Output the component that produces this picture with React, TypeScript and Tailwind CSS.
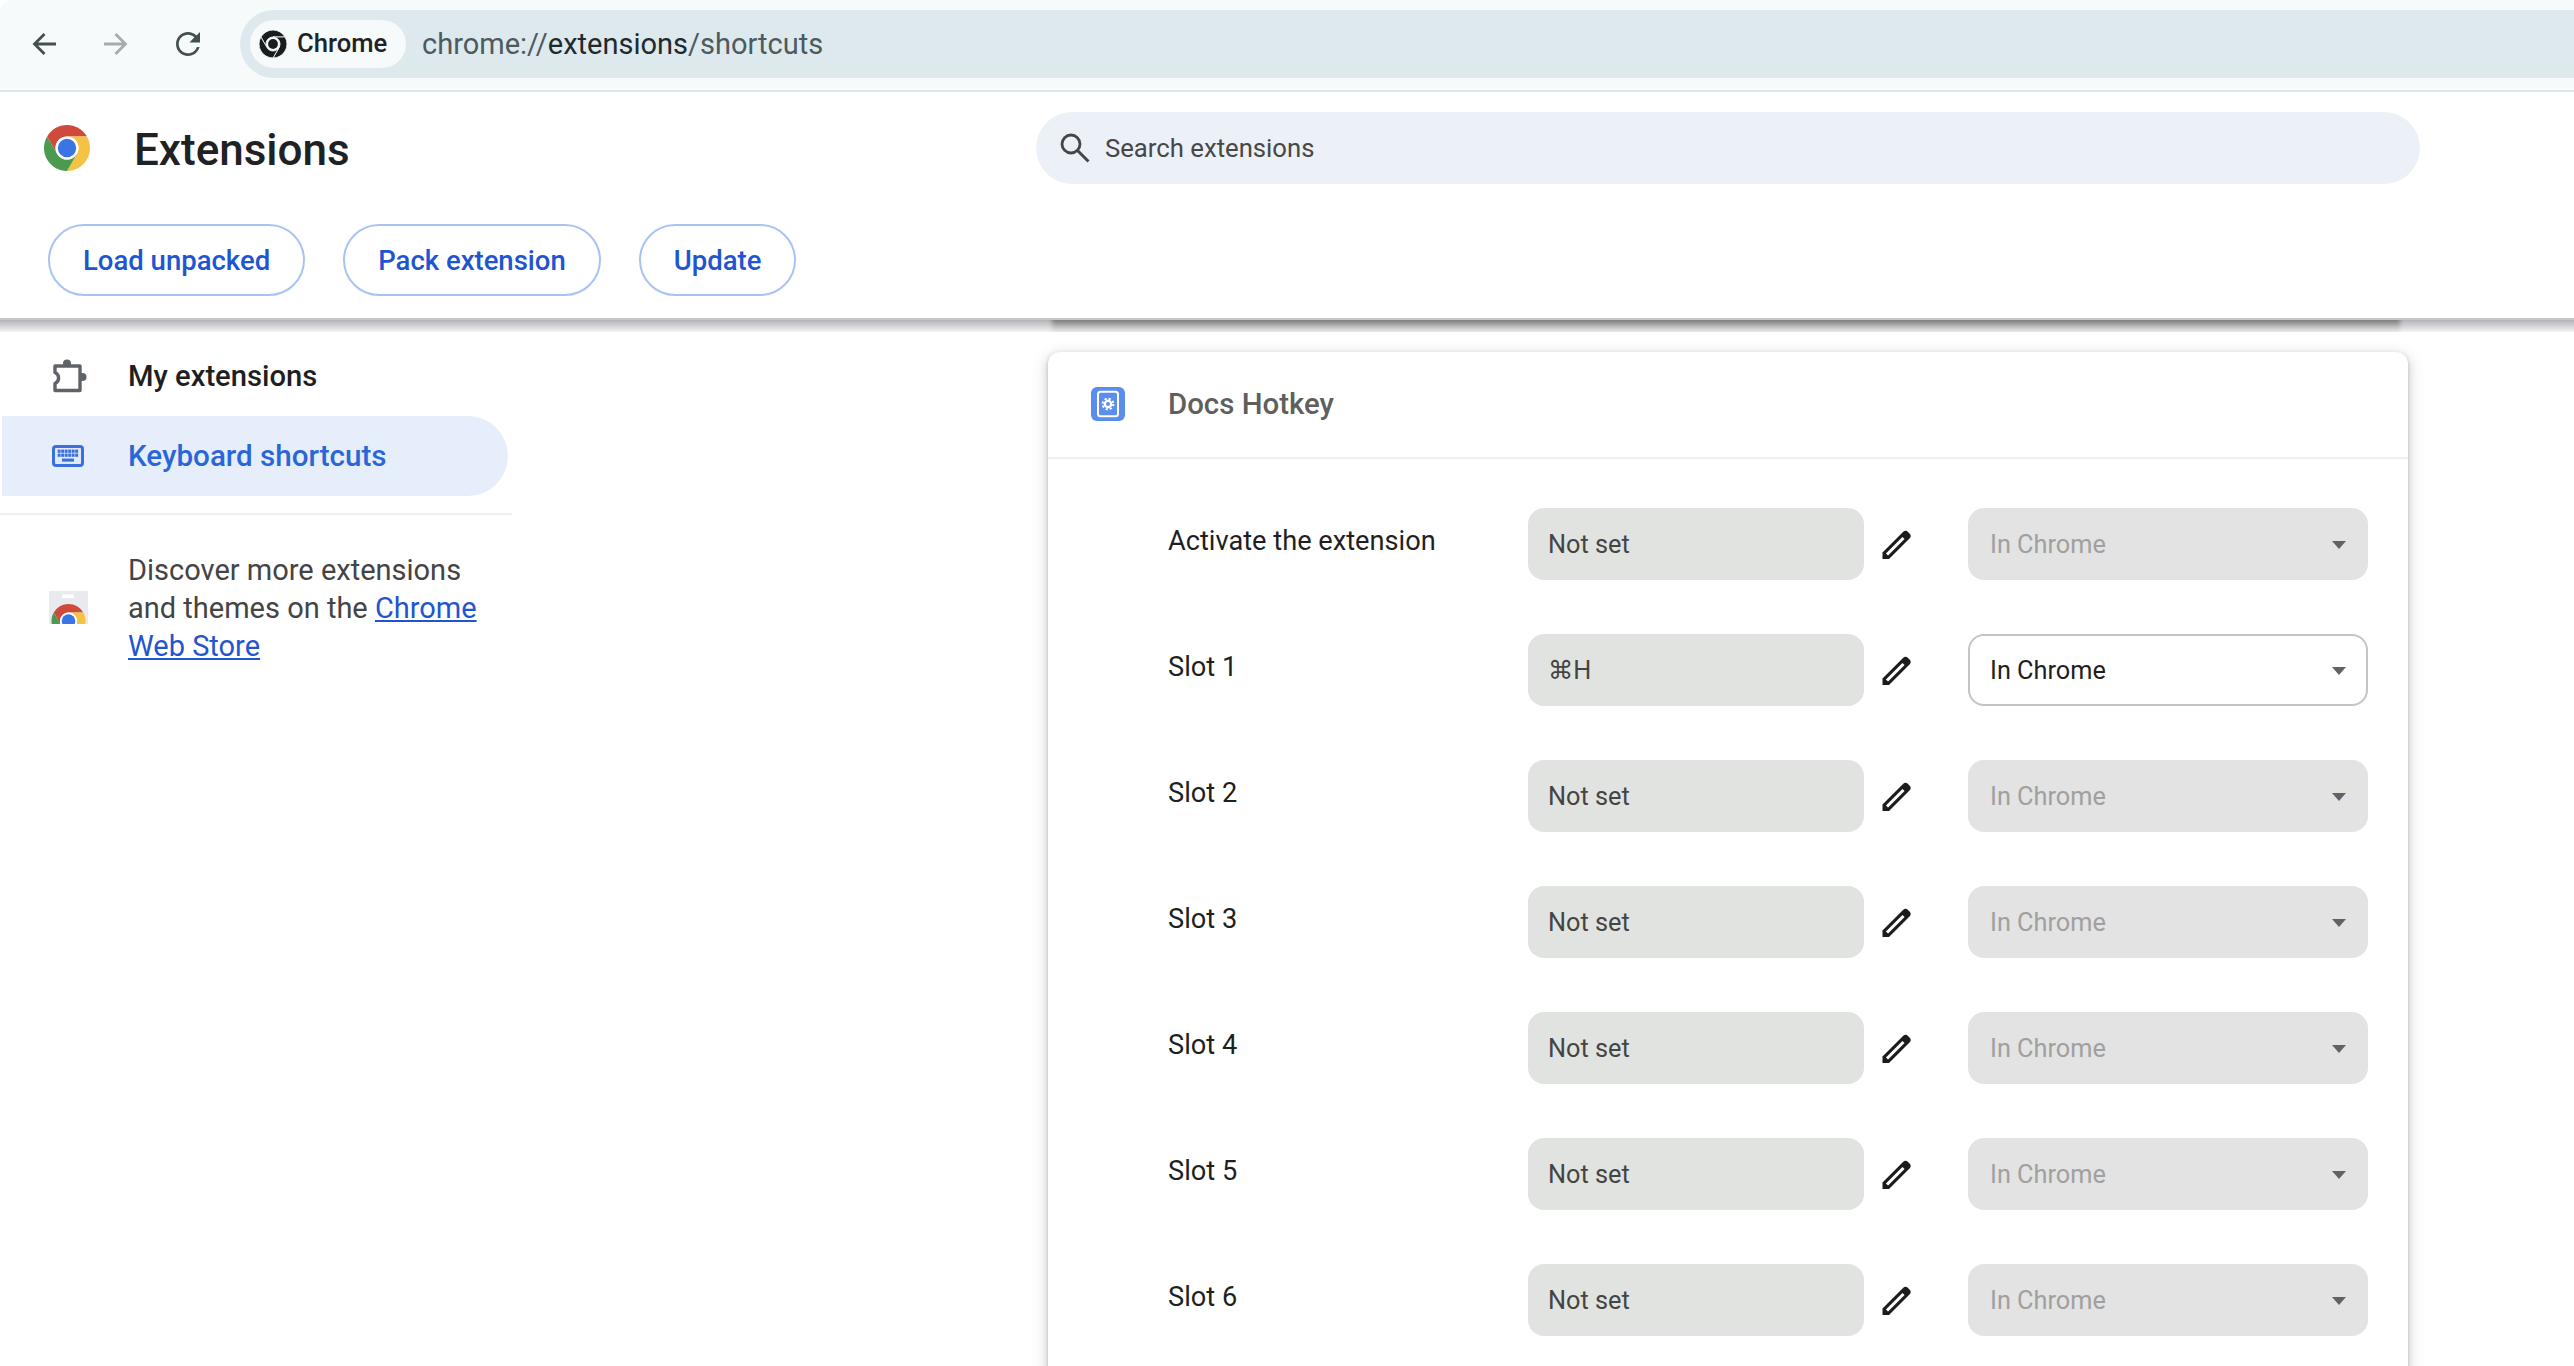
import * as React from "react";

const ChromeLogo = ({ size }: { size: number }) => (
  <svg width={size} height={size} viewBox="4 4 40 40">
    <path d="M41.32 14A20 20 0 0 0 6.68 14L15.34 29A10 10 0 0 1 24 14Z" fill="#cf4a3a" />
    <path d="M24 44A20 20 0 0 0 41.32 14L24 14A10 10 0 0 1 32.66 29Z" fill="#f4c245" />
    <path d="M6.68 14A20 20 0 0 0 24 44L32.66 29A10 10 0 0 1 15.34 29Z" fill="#4a9a4f" />
    <circle cx="24" cy="24" r="10" fill="#fff" />
    <circle cx="24" cy="24" r="8" fill="#3b74e4" />
  </svg>
);

const ChromeMono = () => (
  <svg width="28" height="28" viewBox="4 4 40 40">
    <g fill="#1a1d1f" stroke="#f6fafb" strokeWidth="1.2">
      <path d="M41.32 14A20 20 0 0 0 6.68 14L15.34 29A10 10 0 0 1 24 14Z" />
      <path d="M24 44A20 20 0 0 0 41.32 14L24 14A10 10 0 0 1 32.66 29Z" />
      <path d="M6.68 14A20 20 0 0 0 24 44L32.66 29A10 10 0 0 1 15.34 29Z" />
    </g>
    <circle cx="24" cy="24" r="7" fill="#1a1d1f" />
  </svg>
);

const StoreIcon = () => (
  <svg width="39" height="33" viewBox="0 0 39 33" className="shrink-0">
    <rect width="39" height="33" fill="#e8eaed" />
    <rect x="13" y="3.5" width="12" height="3.5" rx="1" fill="#fff" />
    <g transform="translate(19.5 30) scale(0.85) translate(-24 -24)">
      <path d="M41.32 14A20 20 0 0 0 6.68 14L15.34 29A10 10 0 0 1 24 14Z" fill="#cf4a3a" />
      <path d="M24 44A20 20 0 0 0 41.32 14L24 14A10 10 0 0 1 32.66 29Z" fill="#f4c245" />
      <path d="M6.68 14A20 20 0 0 0 24 44L32.66 29A10 10 0 0 1 15.34 29Z" fill="#4a9a4f" />
      <circle cx="24" cy="24" r="10" fill="#fff" />
      <circle cx="24" cy="24" r="8" fill="#3b74e4" />
    </g>
  </svg>
);

const PuzzleIcon = () => (
  <svg width="35" height="35" viewBox="0 0 35 35" className="shrink-0">
    <circle cx="15" cy="4.5" r="4" fill="#5f6368" />
    <circle cx="30.5" cy="18" r="4" fill="#5f6368" />
    <path
      d="M3 7H28V31.5H3V24.5A6 6 0 0 0 3 13.5Z"
      fill="#fff"
      stroke="#5f6368"
      strokeWidth="3.4"
      strokeLinejoin="round"
    />
  </svg>
);

const KeyboardIcon = () => {
  const keys = [0, 1, 2, 3, 4, 5];
  return (
    <svg width="32" height="22" viewBox="0 0 32 22" className="shrink-0">
      <rect x="1.5" y="1.5" width="29" height="19" rx="2.5" fill="#dfe9fb" stroke="#3a6fdc" strokeWidth="3" />
      {keys.map((k) => (
        <rect key={`a${k}`} x={5.7 + k * 3.5} y="4.6" width="2.9" height="3.2" fill="#3a6fdc" />
      ))}
      {keys.map((k) => (
        <rect key={`b${k}`} x={5.7 + k * 3.5} y="8.6" width="2.9" height="3.2" fill="#3a6fdc" />
      ))}
      <rect x="10" y="13.6" width="12" height="3" fill="#3a6fdc" />
    </svg>
  );
};

const DocsIcon = () => (
  <svg width="34" height="34" viewBox="0 0 34 34" className="shrink-0">
    <rect width="34" height="34" rx="6" fill="#5a8dee" />
    <rect x="7" y="4.8" width="20" height="24.4" rx="2.5" fill="none" stroke="#fff" strokeWidth="2" />
    <circle cx="17" cy="17" r="3.2" fill="none" stroke="#fff" strokeWidth="2.4" />
    <circle cx="17" cy="17" r="5.4" fill="none" stroke="#fff" strokeWidth="2" strokeDasharray="2.2 2.04" />
  </svg>
);

const PencilIcon = () => (
  <svg width="32" height="32" viewBox="0 0 32 32" className="shrink-0">
    <path d="M1.5 24.5L22 4Q24.5 1.5 27 4L28.5 5.5Q31 8 28.5 10.5L8 31H1.5Z" fill="#1c1c1c" />
    <path d="M6 26.5L22.5 10" stroke="#fff" strokeWidth="3" />
  </svg>
);

const rows = [
  { label: "Activate the extension", key: "Not set" },
  { label: "Slot 1", key: "⌘H", active: true },
  { label: "Slot 2", key: "Not set" },
  { label: "Slot 3", key: "Not set" },
  { label: "Slot 4", key: "Not set" },
  { label: "Slot 5", key: "Not set" },
  { label: "Slot 6", key: "Not set" },
];

const App = () => {
  return (
    <div className="flex h-[1366px] w-[2574px] flex-col overflow-hidden bg-white font-[Roboto,'DejaVu_Sans',sans-serif]">
      {/* browser toolbar */}
      <div className="flex h-[92px] shrink-0 items-start rounded-tl-[12px] border-b-2 border-[#dde6e9] bg-[#f6fafb] pt-[10px]">
        <div className="flex h-[68px] w-[240px] shrink-0 items-center pl-[28px]">
          <svg width="34" height="34" viewBox="0 0 34 34" className="shrink-0">
            <path d="M28 17H7M16.5 7L6.5 17L16.5 27" fill="none" stroke="#44504f" strokeWidth="2.8" />
          </svg>
          <svg width="34" height="34" viewBox="0 0 34 34" className="ml-[36px] shrink-0">
            <path d="M6 17H27M17.5 7L27.5 17L17.5 27" fill="none" stroke="#a7abac" strokeWidth="2.8" />
          </svg>
          <svg width="36" height="36" viewBox="0 0 24 24" className="ml-[38px] shrink-0">
            <path
              d="M17.65 6.35C16.2 4.9 14.21 4 12 4c-4.42 0-7.99 3.58-7.99 8s3.57 8 7.99 8c3.73 0 6.84-2.55 7.73-6h-1.8c-.82 2.33-3.04 4.2-5.93 4.2-3.41 0-6.2-2.79-6.2-6.2S8.59 5.8 12 5.8c1.66 0 3.14.69 4.22 1.78L13 11h7V4l-2.35 2.35z"
              fill="#44504f"
            />
          </svg>
        </div>
        <div className="flex h-[68px] flex-1 items-center rounded-l-full bg-[#dde9ed] pl-[10px]">
          <div className="flex h-[48px] w-[156px] items-center rounded-full bg-[#f6fafb] pl-[9px]">
            <ChromeMono />
            <span className="ml-[10px] text-[25.6px] leading-none font-medium text-[#1f2325]">Chrome</span>
          </div>
          <span className="ml-[16px] text-[29px] leading-none text-[#4d5a5e]">
            chrome://<span className="text-[#1f2a2d]">extensions</span>/shortcuts
          </span>
        </div>
      </div>

      {/* extensions header */}
      <header className="h-[228px] shrink-0 border-b-2 border-[#c8c8cc] bg-white">
        <div className="flex h-[112px] items-center">
          <div className="ml-[44px] flex w-[992px] items-center">
            <ChromeLogo size={46} />
            <h1 className="ml-[44px] pt-[4px] text-[44px] leading-none font-medium text-[#202124]">Extensions</h1>
          </div>
          <div className="flex h-[72px] w-[1384px] items-center rounded-full bg-[#ecf0f7] pl-[24px]">
            <svg width="30" height="30" viewBox="0 0 30 30" className="shrink-0">
              <circle cx="11" cy="11" r="9" fill="none" stroke="#444746" strokeWidth="2.8" />
              <path d="M17.5 17.5L28.5 28.5" stroke="#444746" strokeWidth="3" />
            </svg>
            <span className="ml-[15px] pt-[2px] text-[25.7px] leading-none text-[#474747]">Search extensions</span>
          </div>
        </div>
        <div className="mt-[20px] flex gap-[38px] pl-[48px]">
          {["Load unpacked", "Pack extension", "Update"].map((b) => (
            <button
              key={b}
              className="h-[72px] rounded-full border-2 border-[#a8c3f3] bg-white px-[33px] pt-[2px] text-[27.5px] leading-none font-medium text-[#1f55d0]"
            >
              {b}
            </button>
          ))}
        </div>
      </header>

      {/* shadow under the header */}
      <div className="h-[12px] shrink-0 overflow-hidden bg-linear-to-b from-[#b4b4b8] to-[#f5f5f5]">
        <div className="ml-[1052px] -mt-[3px] h-[15px] w-[1348px] bg-linear-to-b from-[#5c5c5c] via-[#a8a8a8] to-[#f1f1f1] blur-[2px]" />
      </div>

      <div className="flex min-h-0 flex-1">
        <aside className="w-[512px] shrink-0 pt-[4px]">
          <div className="flex h-[80px] items-center pl-[52px]">
            <PuzzleIcon />
            <span className="ml-[41px] pt-[2px] text-[29.2px] leading-none font-medium text-[#1f1f1f]">My extensions</span>
          </div>
          <div className="ml-[2px] flex h-[80px] w-[506px] items-center rounded-r-full bg-[#e6eefb] pl-[50px]">
            <KeyboardIcon />
            <span className="ml-[44px] pt-[2px] text-[29.6px] leading-none font-medium text-[#2b66d9]">Keyboard shortcuts</span>
          </div>
          <div className="mt-[17px] h-[2px] bg-[#f0f0f0]" />
          <div className="flex items-center pt-[36px] pl-[49px]">
            <div className="-mt-[2px] shrink-0">
              <StoreIcon />
            </div>
            <p className="ml-[40px] w-[370px] text-[29px] leading-[38px] text-[#444]">
              Discover more extensions and themes on the{" "}
              <span className="text-[#1f55d0] underline">Chrome Web Store</span>
            </p>
          </div>
        </aside>

        <main className="flex-1 pt-[20px] pl-[536px]">
          <div className="w-[1360px] rounded-t-[12px] bg-white pb-[60px] shadow-[0_2px_4px_rgba(60,64,67,0.3),0_4px_12px_4px_rgba(60,64,67,0.15)]">
            <div className="flex h-[107px] items-center border-b-2 border-[#f0f0f0] pb-[2px] pl-[43px]">
              <DocsIcon />
              <span className="ml-[43px] pt-[2px] text-[29.4px] leading-none font-medium text-[#5f5f5f]">Docs Hotkey</span>
            </div>
            <div className="flex flex-col gap-[54px] pt-[49px] pl-[120px]">
              {rows.map((r) => (
                <div key={r.label} className="flex h-[72px] items-center">
                  <span className="w-[360px] pb-[4px] text-[27.2px] leading-none text-[#1f1f1f]">{r.label}</span>
                  <div className="flex h-[72px] w-[336px] items-center rounded-[16px] bg-[#e1e3e1] pt-[1px] pl-[20px] text-[25.3px] leading-none text-[#444]">
                    {r.key}
                  </div>
                  <span className="ml-[17px]">
                    <PencilIcon />
                  </span>
                  <div
                    className={
                      r.active
                        ? "ml-[55px] flex h-[72px] w-[400px] items-center justify-between rounded-[16px] border-2 border-[#c4c4c4] bg-white pt-[1px] pr-[20px] pl-[20px] text-[25.3px] leading-none text-[#1f1f1f]"
                        : "ml-[55px] flex h-[72px] w-[400px] items-center justify-between rounded-[16px] bg-[#e3e3e3] pt-[1px] pr-[22px] pl-[22px] text-[25.3px] leading-none text-[#a0a0a0]"
                    }
                  >
                    In Chrome
                    <svg width="14" height="8" viewBox="0 0 14 8">
                      <path d="M0 0H14L7 8Z" fill="#5f6368" />
                    </svg>
                  </div>
                </div>
              ))}
            </div>
          </div>
        </main>
      </div>
    </div>
  );
};

export default App;
